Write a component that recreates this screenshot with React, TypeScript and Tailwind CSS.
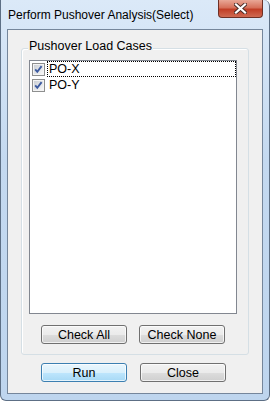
import React from 'react';

const font = "font-['Liberation_Sans',Arial,sans-serif]";

const CheckBox = () => (
  <svg width="13" height="13" viewBox="0 0 13 13" className="shrink-0">
    <defs>
      <linearGradient id="cbg" x1="0" y1="0" x2="1" y2="1">
        <stop offset="0" stopColor="#cbcfd5" />
        <stop offset="1" stopColor="#f7f7f7" />
      </linearGradient>
    </defs>
    <rect x="0.5" y="0.5" width="12" height="12" fill="#f4f4f4" stroke="#8e8f8f" />
    <rect x="2" y="2" width="9" height="9" fill="url(#cbg)" />
    <path d="M3.2 6.4 L5.3 8.8 L9.6 3.2" fill="none" stroke="#3d5ba0" strokeWidth="1.9" />
  </svg>
);

const Button = ({ label, primary }: { label: string; primary?: boolean }) => (
  <button
    className={
      'w-[86px] h-[19px] rounded-[3px] border text-[12.5px] leading-[14px] text-black shadow-[inset_0_0_0_1px_rgba(255,255,255,0.7)] ' +
      (primary
        ? 'border-[#3c7fb1] bg-[linear-gradient(#eaf6fd_0%,#d9f0fc_50%,#bee6fd_51%,#a7d9f5_100%)]'
        : 'border-[#707070] bg-[linear-gradient(#f2f2f2_0%,#ebebeb_50%,#dddddd_51%,#cfcfcf_100%)]')
    }
  >
    {label}
  </button>
);

const items = ['PO-X', 'PO-Y'];

export default function App() {
  return (
    <div
      className={`w-[270px] h-[401px] flex flex-col rounded-b-[6px] rounded-tr-[6px] border-x border-b border-[#5d6f85] bg-[linear-gradient(#dbe9f8,#c4d9f0_40%,#bed5ee)] ${font}`}
    >
      {/* title bar */}
      <div className="h-[29px] flex items-start justify-between">
        <div className="pl-[7px] pt-[8px] text-[12px] leading-[14px] text-black">
          Perform Pushover Analysis(Select)
        </div>
        <div className="mr-[6px] w-[45px] h-[18px] rounded-b-[4px] border border-t-0 border-[#6e3025] bg-[linear-gradient(#e9a796_0%,#d6705a_45%,#c13e26_55%,#cf6a52_100%)] flex items-center justify-center">
          <svg width="13" height="11" viewBox="0 0 13 11">
            <path d="M2 1.5 L11 9.5 M11 1.5 L2 9.5" stroke="#4a2b26" strokeWidth="4" strokeLinecap="square" />
            <path d="M2 1.5 L11 9.5 M11 1.5 L2 9.5" stroke="#ffffff" strokeWidth="2.2" strokeLinecap="square" />
          </svg>
        </div>
      </div>

      {/* client area */}
      <div className="mx-[6px] h-[365px] border border-[#75869b] bg-[#f0f0f0] flex flex-col">
        <div className="relative mt-[18px] mx-[13px] h-[307px] rounded-[3px] border border-[#d5dfe5] shadow-[inset_1px_1px_0_#ffffff]">
          <div className="absolute left-[6px] top-[-10px] px-[1px] bg-[#f0f0f0] text-[12.5px] leading-[14px] text-black">
            Pushover Load Cases
          </div>
          <div className="ml-[7px] mt-[11px] w-[208px] h-[254px] border border-[#828790] bg-white">
            {items.map((item, i) => (
              <div key={item} className="h-[16px] flex items-center text-[12.5px] leading-[14px] text-black">
                <div className="ml-[2px] mr-[2px] flex items-center">
                  <CheckBox />
                </div>
                <div
                  className={
                    'flex-1 h-[16px] pl-[1px] flex items-center border ' +
                    (i === 0 ? 'border-dotted border-black' : 'border-transparent')
                  }
                >
                  {item}
                </div>
              </div>
            ))}
          </div>
          <div className="ml-[19px] mt-[11px] flex gap-[12px]">
            <Button label="Check All" />
            <Button label="Check None" />
          </div>
        </div>
        <div className="ml-[33px] mt-[8px] flex gap-[13px]">
          <Button label="Run" primary />
          <Button label="Close" />
        </div>
      </div>
    </div>
  );
}
